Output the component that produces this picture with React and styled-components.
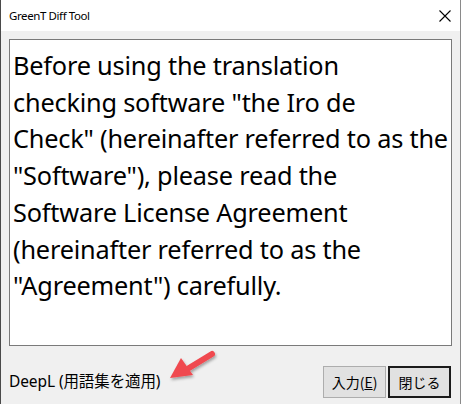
import styled, { createGlobalStyle } from "styled-components"

const GlobalStyle = createGlobalStyle`
  html, body {
    margin: 0;
    padding: 0;
    background: #6b3b32;
  }
  * { box-sizing: border-box; }
`

const Window = styled.div`
  width: 461px;
  height: 404px;
  display: flex;
  flex-direction: column;
  background: #f0f0f0;
  border-left: 1px solid #4a4a4a;
  border-right: 1px solid #8a8a8a;
  font-family: "Noto Sans", "Noto Sans CJK JP", sans-serif;
  color: #000;
  position: relative;
`
const TitleBar = styled.div`
  height: 31px;
  background: #fff;
  display: flex;
  align-items: center;
  justify-content: space-between;
  padding: 0 0 0 8px;
`
const Title = styled.span`
  font-size: 11.5px;
  letter-spacing: -0.4px;
  color: #000;
`
const CloseButton = styled.div`
  width: 30px;
  height: 31px;
  display: flex;
  align-items: center;
  justify-content: center;
`
const Body = styled.div`
  flex: 1;
  display: flex;
  flex-direction: column;
  padding: 8px 8px 6px 8px;
`
const TextBox = styled.div`
  height: 307px;
  background: #fff;
  border: 1px solid #7a7a7a;
  padding: 7px 0 0 3px;
  font-size: 25.3px;
  line-height: 36.7px;
  letter-spacing: -0.2px;
`
const Footer = styled.div`
  flex: 1;
  display: flex;
  align-items: flex-end;
  justify-content: space-between;
`
const Status = styled.span`
  font-size: 15.5px;
  padding-bottom: 6px;
  letter-spacing: -0.1px;
`
const Buttons = styled.div`
  display: flex;
  gap: 2px;
  padding-right: 1px;
`
const Button = styled.button`
  height: 32px;
  width: ${({ $w }) => $w}px;
  background: #e1e1e1;
  border: ${({ $default }) => ($default ? "2px solid #1b1b1b" : "1px solid #adadad")};
  font-family: "Noto Sans CJK JP", sans-serif;
  font-size: 14px;
  color: #000;
  padding: 0;
  display: flex;
  align-items: center;
  justify-content: center;
`
const Key = styled.span`
  text-decoration: underline;
`
const Arrow = styled.svg`
  position: absolute;
  left: 160px;
  top: 344px;
`

const lines = [
  "Before using the translation",
  "checking software \"the Iro de",
  "Check\" (hereinafter referred to as the",
  "\"Software\"), please read the",
  "Software License Agreement",
  "(hereinafter referred to as the",
  "\"Agreement\") carefully.",
]

export default function App() {
  return (
    <>
      <GlobalStyle />
      <Window>
        <TitleBar>
          <Title>GreenT Diff Tool</Title>
          <CloseButton>
            <svg width="12" height="12" viewBox="0 0 12 12">
              <path d="M0.5 0.5 L11.5 11.5 M11.5 0.5 L0.5 11.5" stroke="#000" strokeWidth="1.1" />
            </svg>
          </CloseButton>
        </TitleBar>
        <Body>
          <TextBox>
            {lines.map((l, i) => (
              <div key={i}>{l}</div>
            ))}
          </TextBox>
          <Footer>
            <Status>DeepL (用語集を適用)</Status>
            <Buttons>
              <Button $w={63}>入力(<Key>E</Key>)</Button>
              <Button $w={63} $default>閉じる</Button>
            </Buttons>
          </Footer>
        </Body>
        <Arrow width="60" height="44" viewBox="0 0 60 44">
          <defs>
            <filter id="sh" x="-30%" y="-30%" width="160%" height="160%">
              <feGaussianBlur in="SourceAlpha" stdDeviation="1.5" />
              <feOffset dx="1" dy="2" />
              <feComponentTransfer><feFuncA type="linear" slope="0.35" /></feComponentTransfer>
              <feMerge><feMergeNode /><feMergeNode in="SourceGraphic" /></feMerge>
            </filter>
          </defs>
          <g filter="url(#sh)">
            <line x1="51" y1="10" x2="28" y2="24" stroke="#f04a4f" strokeWidth="6" strokeLinecap="round" />
            <polygon points="9,34 20,14 32,31" fill="#f04a4f" />
          </g>
        </Arrow>
      </Window>
    </>
  )
}
